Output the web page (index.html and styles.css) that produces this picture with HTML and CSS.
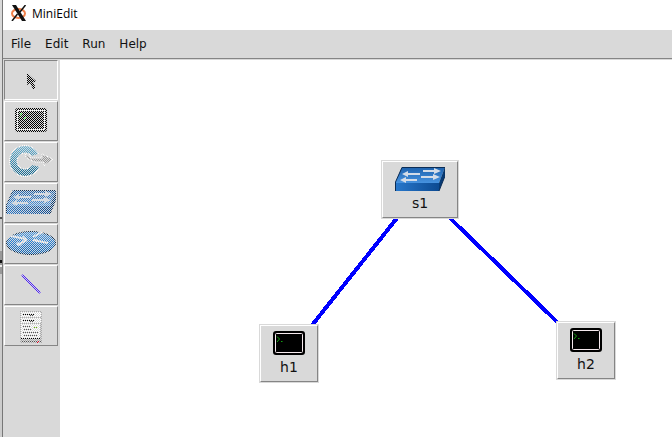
FILE: index.html
```html
<!DOCTYPE html>
<html lang="en">
<head>
<meta charset="utf-8">
<title>MiniEdit</title>
<link rel="stylesheet" href="styles.css">
</head>
<body>
<svg class="defs" aria-hidden="true">
  <defs>
    <pattern id="stipple" width="2" height="2" patternUnits="userSpaceOnUse">
      <path d="M0 0h1v1H0zM1 1h1v1H1z" fill="#d9d9d9"/>
    </pattern>
    <linearGradient id="blue" x1="0" y1="0" x2="0" y2="1">
      <stop offset="0" stop-color="#1b60ac"/><stop offset="1" stop-color="#4793e0"/>
    </linearGradient>
    <linearGradient id="front" x1="0" y1="0" x2="1" y2="0">
      <stop offset="0" stop-color="#2878cc"/><stop offset="1" stop-color="#0c4a92"/>
    </linearGradient>
    <linearGradient id="ring" x1="0" y1="0" x2="0" y2="1">
      <stop offset="0" stop-color="#62b2d6"/><stop offset="1" stop-color="#08658f"/>
    </linearGradient>
    <linearGradient id="disc" x1="0" y1="0" x2="0" y2="1">
      <stop offset="0" stop-color="#4b9be6"/><stop offset=".5" stop-color="#1f7ad2"/><stop offset="1" stop-color="#0863b8"/>
    </linearGradient>
    <symbol id="terminal" viewBox="0 0 32 24">
      <rect width="32" height="24" rx="3" fill="#000"/>
      <rect x="2.500" y="2.500" width="27" height="19" rx="1" fill="none" stroke="#f5e9ee"/>
      <path d="M4 5.500l2.500 2.500-2.500 3M8 10.500h1.500" fill="none" stroke="#12a512"/>
    </symbol>
    <symbol id="switch" viewBox="0 0 50 24">
      <path d="M7 0H50L44 16H0z" fill="url(#blue)"/>
      <path d="M0 16H44V24H0z" fill="url(#front)"/>
      <path d="M50 0V9L44 24V16z" fill="#063a75"/>
      <path d="M0.500 24V15L7 0.500H50V9L44 24" fill="none" stroke="#0b2c55"/>
      <path d="M28 3h11V1l7 3-7 3V5H28zM25 6v2H13v2L7 7l6-3v2zM26 9h12V7l7 3-7 3v-2H26zM22 12v2H11v2L5 13l6-3v2z" fill="#d3dce8"/>
    </symbol>
  </defs>
</svg>
<main class="window">
  <header class="titlebar">
    <svg class="logo" viewBox="0 0 16 16" aria-hidden="true">
      <ellipse cx="7.500" cy="8.500" rx="6.500" ry="4.500" fill="none" stroke="#f0804a" stroke-width="2"/>
      <path d="M1 0h4l10 16h-4z" fill="#111"/>
      <path d="M14.500 0L9 7M6.500 9L1 16" stroke="#111" stroke-width="1.500"/>
    </svg>
    <h1>MiniEdit</h1>
  </header>
  <nav class="menubar">
    <button>File</button><button>Edit</button><button>Run</button><button>Help</button>
  </nav>
  <div class="workspace">
    <aside class="toolbar">
      <button class="tool selected" aria-label="Select">
        <svg viewBox="0 0 52 36"><path d="M22 12v12l3-2 3 6h2v-3l-2-4h3v-1z" fill="#000"/><rect width="52" height="36" fill="url(#stipple)"/></svg>
      </button>
      <button class="tool" aria-label="Host">
        <svg viewBox="0 0 52 36"><use href="#terminal" x="10" y="6" width="32" height="24"/><rect x="12.500" y="8.500" width="27" height="19" fill="none" stroke="#fff"/><path d="M15 11h2v2h-2zM19 15h2v2h-2z" fill="#2be02b"/><rect width="52" height="36" fill="url(#stipple)"/></svg>
      </button>
      <button class="tool" aria-label="Controller">
        <svg viewBox="0 0 52 36">
          <circle cx="20" cy="18" r="16" fill="#fff"/>
          <circle cx="20" cy="18" r="15" fill="url(#ring)"/>
          <circle cx="20" cy="18" r="8" fill="#d9d9d9" stroke="#fff"/>
          <path d="M26 13l10-3v14l-10-2z" fill="#d9d9d9"/>
          <path d="M20 11l6 4h11v-4l11 5-9 7v-4h-9l-9-4z" fill="#999" stroke="#fff"/>
          <rect width="52" height="36" fill="url(#stipple)"/>
        </svg>
      </button>
      <button class="tool" aria-label="Switch">
        <svg viewBox="0 0 52 36"><use href="#switch" x="1" y="6" width="50" height="24"/><rect width="52" height="36" fill="url(#stipple)"/></svg>
      </button>
      <button class="tool" aria-label="Legacy router">
        <svg viewBox="0 0 52 36">
          <ellipse cx="26" cy="18" rx="24.500" ry="11.500" fill="url(#disc)" stroke="#08223f"/>
          <path d="M6 11l15 3M28 12l9-5M12 20l10-5M28 15l15 3" stroke="#eef4fb" stroke-width="2"/>
          <path d="M18 11l4 3-4 1M33 7h4v2M12 17v3h5M32 14l-3 1 3 2" fill="none" stroke="#eef4fb"/>
          <rect width="52" height="36" fill="url(#stipple)"/>
        </svg>
      </button>
      <button class="tool" aria-label="Link">
        <svg viewBox="0 0 52 36"><path d="M17 9l18 18" stroke="#30f" stroke-width="2"/><rect width="52" height="36" fill="url(#stipple)"/></svg>
      </button>
      <button class="tool" aria-label="Server">
        <svg viewBox="0 0 52 36">
          <path d="M15 4h22v32H15z" fill="#aaa"/>
          <path d="M16 5h20v26H16z" fill="#fff"/>
          <path d="M16 10.500h20M16 16.500h20M35.500 18v13" stroke="#aaa"/>
          <path d="M18 7.500h11M18 13.500h11M16 31.500h20" stroke="#000"/>
          <path d="M25 8.500h3M25 14.500h3M16 34.500h20" stroke="#555"/>
          <path d="M18 19.500h8M18 22.500h8M18 25.500h15M18 28.500h15" stroke="#555"/>
          <path d="M29 20.500h4" stroke="#69b800"/>
          <path d="M32 35h2" stroke="#e00020" stroke-width="2"/>
          <rect width="52" height="36" fill="url(#stipple)"/>
        </svg>
      </button>
    </aside>
    <section class="canvas" aria-label="Topology">
      <svg class="links" aria-hidden="true"><path d="M360 129L230 293M360 129L526 290" stroke="#00f" stroke-width="4" fill="none" shape-rendering="crispEdges"/></svg>
      <button class="node s1"><svg class="switch" aria-hidden="true"><use href="#switch"/></svg><span>s1</span></button>
      <button class="node h1"><svg class="host" aria-hidden="true"><use href="#terminal"/></svg><span>h1</span></button>
      <button class="node h2"><svg class="host" aria-hidden="true"><use href="#terminal"/></svg><span>h2</span></button>
    </section>
  </div>
</main>
</body>
</html>
```
FILE: styles.css
```css
* { box-sizing: border-box; }
body {
  margin: 0;
  color: #111;
  background: linear-gradient(#d9d9d9 217px, #555 217px 219px, #ccc 219px 251px, #999 251px 260px, #111 260px 263px, #999 263px 265px, #eee 265px 267px, #999 267px 274px, #ccc 274px);
}
button { font: inherit; color: inherit; background: #d9d9d9; }
.defs { position: absolute; width: 0; height: 0; }
.window { display: flex; flex-direction: column; min-height: 100vh; margin-left: 2px; border-left: 1px solid #777; background: #d9d9d9; }
.titlebar { display: flex; align-items: center; gap: 5px; height: 30px; padding: 0 8px 4px; background: #fff; }
.titlebar h1 { margin: 0; font: 12px "Open Sans", sans-serif; color: #000; }
.logo { width: 16px; height: 16px; }
.menubar { display: flex; height: 29px; padding: 0 1px; border-bottom: 1px solid #858585; font: 12px "DejaVu Sans", sans-serif; }
.menubar button { border: 0; padding: 0 7px; }
.workspace { display: flex; flex: 1; border-top: 1px solid #d9d9d9; }
.toolbar { display: flex; flex-direction: column; gap: 1px; width: 57px; padding: 0 2px 0 1px; }
.tool { display: block; height: 40px; padding: 0 0 2px; border: 1px solid; border-color: #fff #858585 #858585 #fff; }
.tool.selected { border-color: #858585 #fff #fff #858585; }
.tool svg { display: block; width: 52px; height: 36px; }
.canvas { position: relative; flex: 1; background: #fff; overflow: hidden; }
.links { position: absolute; inset: 0; width: 100%; height: 100%; }
.node { position: absolute; display: flex; flex-direction: column; align-items: center; gap: 2px; padding: 5px 4px 4px; border: 1px solid; border-color: #fff #858585 #858585 #fff; outline: 1px solid #d9d9d9; font: 14px/20px "DejaVu Sans", sans-serif; }
.switch { width: 50px; height: 24px; }
.host { width: 32px; height: 24px; }
.s1 { left: 322px; top: 101px; width: 76px; height: 57px; }
.h1 { left: 200px; top: 265px; width: 58px; height: 57px; }
.h2 { left: 497px; top: 262px; width: 58px; height: 57px; }
```
